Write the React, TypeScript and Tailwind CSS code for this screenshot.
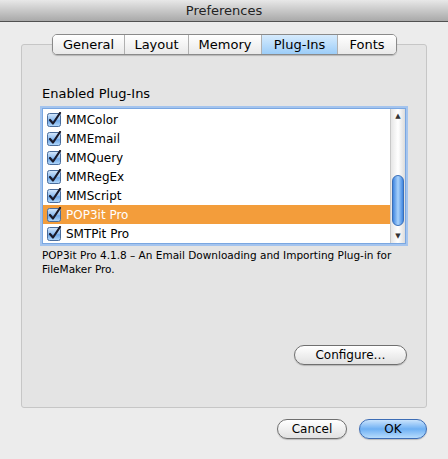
import React from "react";

const font = { fontFamily: '"DejaVu Sans", "Lucida Grande", sans-serif' };

function Check() {
  return (
    <svg width="15" height="15" viewBox="0 0 15 15" className="shrink-0">
      <defs>
        <linearGradient id="cbg" x1="0" y1="0" x2="0" y2="1">
          <stop offset="0" stopColor="#d6e8fb" />
          <stop offset="0.5" stopColor="#8dbcf0" />
          <stop offset="0.55" stopColor="#6fa7e6" />
          <stop offset="1" stopColor="#b5dafc" />
        </linearGradient>
      </defs>
      <rect x="0.5" y="1.5" width="13" height="13" rx="2" fill="url(#cbg)" stroke="#4a6d9c" />
      <path d="M3 8 L6 11.5 L13 1" fill="none" stroke="#1a1a2a" strokeWidth="2.2" strokeLinecap="round" strokeLinejoin="round" />
    </svg>
  );
}

const tabs = ["General", "Layout", "Memory", "Plug-Ins", "Fonts"];
const tabW = [72, 64, 73, 76, 59];
const items = ["MMColor", "MMEmail", "MMQuery", "MMRegEx", "MMScript", "POP3it Pro", "SMTPit Pro"];

export default function App() {
  return (
    <div className="w-[448px] h-[459px] bg-[#ececec] flex flex-col text-black" style={font}>
      <div className="h-[22px] shrink-0 bg-gradient-to-b from-[#e8e8e8] to-[#a9a9a9] border-b border-[#515151] flex items-center justify-center text-[13px] text-[#222]">
        Preferences
      </div>
      <div className="relative mx-[21px] mt-[22px] h-[364px] border border-[#c6c6c6] rounded-[3px] bg-[#e4e4e4] flex flex-col px-[20px]">
        <div className="absolute left-[30px] top-[-11px] h-[21px] flex rounded-[5px] border border-[#8a8a8a] overflow-hidden shadow-[0_1px_1px_rgba(0,0,0,0.2)]">
          {tabs.map((t, i) => (
            <div
              key={t}
              style={{ width: tabW[i] - (i === 0 ? 1 : 0) }}
              className={
                "flex items-center justify-center text-[13px] " +
                (i > 0 ? "border-l border-[#b0b0b0] " : "") +
                (t === "Plug-Ins"
                  ? "bg-gradient-to-b from-[#d6ebfd] to-[#9ccdf8] border-[#5a7fae]"
                  : "bg-gradient-to-b from-white to-[#e9e9e9]")
              }
            >
              {t}
            </div>
          ))}
        </div>
        <div className="mt-[40px] text-[13px] leading-[18px]">Enabled Plug-Ins</div>
        <div className="mt-[5px] h-[136px] border border-[#7aa7e1] shadow-[0_0_0_2px_#a4c4ee] flex bg-white">
          <div className="flex-1 flex flex-col pt-[1px]">
            {items.map((it) => (
              <div
                key={it}
                className={
                  "h-[19px] flex items-center gap-[4px] pl-[4px] text-[12px] " +
                  (it === "POP3it Pro" ? "bg-[#f39d3b] text-white" : "text-black")
                }
              >
                <Check />
                <span>{it}</span>
              </div>
            ))}
          </div>
          <div className="w-[15px] border-l border-[#c8c8c8] bg-gradient-to-r from-[#e6e6e6] via-white to-[#dcdcdc] flex flex-col items-center">
            <div className="h-[14px] flex items-center justify-center text-[7px] text-[#333]">▲</div>
            <div className="h-[51px] w-[12px] mt-[52px] rounded-full border border-[#3a6fb8] bg-gradient-to-r from-[#3f86e0] via-[#a8d2fb] to-[#3f86e0]"></div>
            <div className="flex-1"></div>
            <div className="h-[14px] flex items-center justify-center text-[7px] text-[#333]">▼</div>
          </div>
        </div>
        <div className="mt-[4px] text-[10.5px] leading-[14px] -mr-[6px]">
          POP3it Pro 4.1.8 – An Email Downloading and Importing Plug-in for FileMaker Pro.
        </div>
        <div className="flex justify-end mt-[69px] -mr-[1px]">
          <button className="w-[113px] h-[20px] rounded-full border border-[#6f6f6f] bg-gradient-to-b from-white to-[#e1e1e1] text-[12px] shadow-[0_1px_1px_rgba(0,0,0,0.2)]">
            Configure…
          </button>
        </div>
      </div>
      <div className="flex justify-end gap-[12px] mt-[11px] pr-[21px]">
        <button className="w-[70px] h-[20px] rounded-full border border-[#6f6f6f] bg-gradient-to-b from-white to-[#e1e1e1] text-[12px] shadow-[0_1px_1px_rgba(0,0,0,0.2)]">
          Cancel
        </button>
        <button className="w-[68px] h-[20px] rounded-full border border-[#3d6db5] bg-gradient-to-b from-[#c9e3fc] via-[#6eb0f3] to-[#b7dcfc] text-[12px] shadow-[0_1px_1px_rgba(0,0,0,0.2)]">
          OK
        </button>
      </div>
    </div>
  );
}
